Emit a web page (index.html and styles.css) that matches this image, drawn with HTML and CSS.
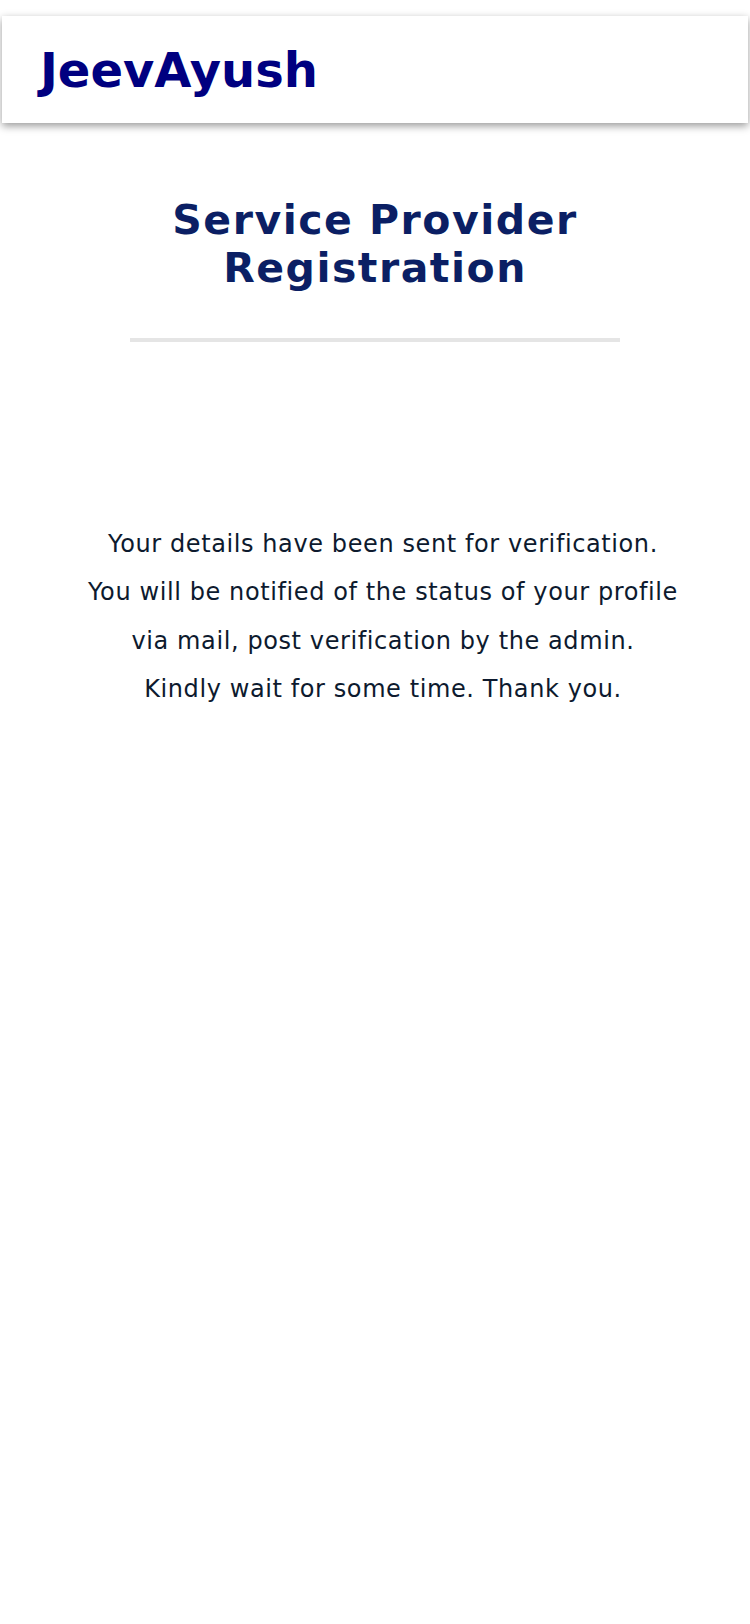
FILE: index.html
```html
<!DOCTYPE html>
<html lang="en">
<head>
<meta charset="utf-8">
<title>JeevAyush - Service Provider Registration</title>
<link rel="stylesheet" href="styles.css">
</head>
<body>
<header class="topbar">
  <div class="logo">JeevAyush</div>
</header>
<main class="content">
  <h1 class="title">Service Provider<br>Registration</h1>
  <hr class="divider">
  <p class="message">Your details have been sent for verification.<br>You will be notified of the status of your profile<br>via mail, post verification by the admin.<br>Kindly wait for some time. Thank you.</p>
</main>
</body>
</html>
```
FILE: styles.css
```css
html, body {
  margin: 0;
  padding: 0;
  background: #ffffff;
}
body {
  font-family: "DejaVu Sans", sans-serif;
  width: 750px;
}
.topbar {
  margin: 16px 2px 0 2px;
  height: 107px;
  background: #ffffff;
  box-shadow: 0 3px 8px rgba(0, 0, 0, 0.4);
  display: flex;
  align-items: center;
  padding-left: 38px;
  box-sizing: border-box;
}
.logo {
  font-family: "DejaVu Sans", sans-serif;
  font-weight: 700;
  font-size: 48px;
  color: #000080;
  line-height: 1;
}
.content {
  display: flex;
  flex-direction: column;
  align-items: center;
}
.title {
  margin: 73px 0 0 0;
  font-family: "DejaVu Sans", sans-serif;
  font-weight: 700;
  font-size: 41px;
  letter-spacing: 1.5px;
  line-height: 48px;
  color: #0b1f64;
  text-align: center;
}
.divider {
  margin: 46px 0 0 0;
  width: 490px;
  height: 4px;
  border: 0;
  background: #e5e5e5;
}
.message {
  margin: 178px 0 0 0;
  padding-left: 16px;
  font-family: "DejaVu Sans", sans-serif;
  font-size: 24px;
  letter-spacing: 0.6px;
  line-height: 48.3px;
  color: #0d1a2e;
  text-align: center;
}
```
